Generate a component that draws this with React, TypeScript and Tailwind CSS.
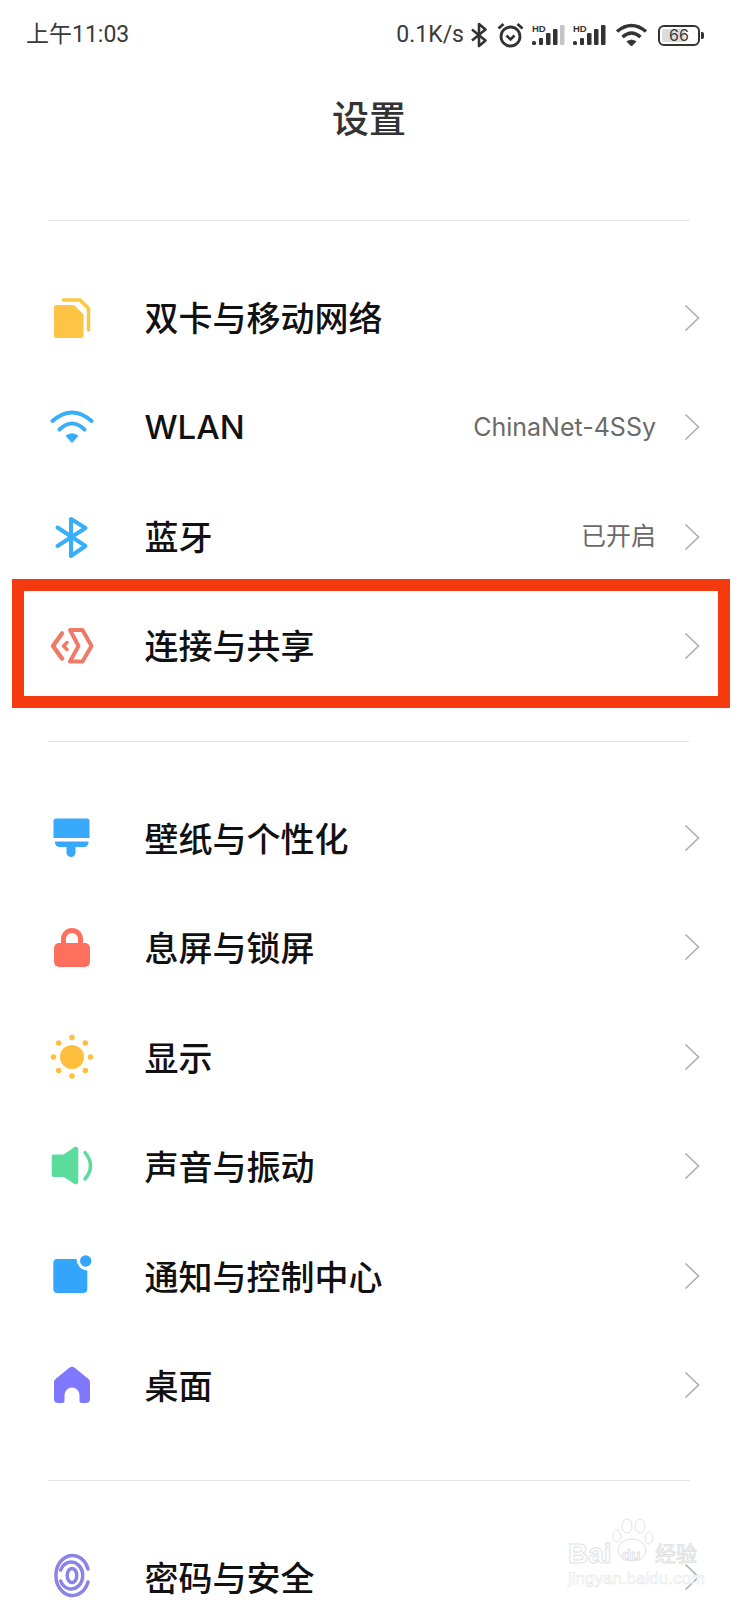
const rowFont = "font-['Inter','Noto_Sans_CJK_SC',sans-serif]";

function SimIcon() {
  return (
    <svg viewBox="0 0 48 48" className="h-12 w-12">
      <path d="M8.500 11h17.500l9.500 9.500v21a2.500 2.500 0 0 1-2.500 2.500h-24.500a2.500 2.500 0 0 1-2.500-2.500v-28a2.500 2.500 0 0 1 2.500-2.500z" fill="#ffc445" />
      <path d="M15.500 6h16.500l8.500 8.500v21.500" fill="none" stroke="#ffc445" strokeWidth="3.500" strokeLinecap="round" strokeLinejoin="round" />
    </svg>
  );
}

function WifiIcon() {
  return (
    <svg viewBox="0 0 48 48" className="h-12 w-12">
      <path d="M4.500 18Q24 1 43.500 18" fill="none" stroke="#38adf8" strokeWidth="4" strokeLinecap="round" />
      <path d="M11.500 26.500Q24 14.500 36.500 26.500" fill="none" stroke="#38adf8" strokeWidth="4" strokeLinecap="round" />
      <path d="M18 33Q24 28.500 30 33L24 39.500Z" fill="#38adf8" stroke="#38adf8" strokeWidth="1" strokeLinejoin="round" />
    </svg>
  );
}

function BluetoothIcon() {
  return (
    <svg viewBox="0 0 48 48" className="h-12 w-12">
      <path d="M9.500 14.500L37.500 33L23 43V6L37.500 15L9.500 33" fill="none" stroke="#38adf8" strokeWidth="4" strokeLinecap="round" strokeLinejoin="round" />
    </svg>
  );
}

function ShareIcon() {
  return (
    <svg viewBox="0 0 48 48" className="h-12 w-12" fill="none" stroke="#ee7b68" strokeLinecap="round" strokeLinejoin="round">
      <path d="M22 8H34.500L43.500 24L34.500 39.500H22L30.500 24Z" strokeWidth="4" />
      <path d="M14 11.500L5 24L14 36.500" strokeWidth="4.500" />
      <path d="M19 20.500L15.500 24L19 27.500" strokeWidth="3.500" />
    </svg>
  );
}

function BrushIcon() {
  return (
    <svg viewBox="0 0 48 48" className="h-12 w-12" fill="#38a8fb">
      <path d="M8 4.500h31a2.500 2.500 0 0 1 2.500 2.500V24H5.500V7a2.500 2.500 0 0 1 2.500-2.500z" />
      <path d="M7 27.500h33.500v1a4.500 4.500 0 0 1-4.500 4.500h-8.500v5.500a4.500 4.500 0 0 1-9 0V33H11.500a4.500 4.500 0 0 1-4.500-4.500z" />
    </svg>
  );
}

function LockIcon() {
  return (
    <svg viewBox="0 0 48 48" className="h-12 w-12">
      <path d="M15.500 22v-6a8.500 8.500 0 0 1 17 0v6" fill="none" stroke="#ff6f5e" strokeWidth="5" />
      <rect x="6" y="20" width="36" height="24" rx="5" fill="#ff6f5e" />
    </svg>
  );
}

function SunIcon() {
  const rays = [
    [24, 4.500], [37.300, 10], [42.500, 24], [37.300, 37.500],
    [24, 43], [10.700, 37.500], [5.500, 24], [10.700, 10],
  ];
  return (
    <svg viewBox="0 0 48 48" className="h-12 w-12" fill="#ffbe3d">
      <circle cx="24" cy="24" r="12" />
      {rays.map(([x, y]) => (
        <circle key={`${x}-${y}`} cx={x} cy={y} r="2.800" />
      ))}
    </svg>
  );
}

function SoundIcon() {
  return (
    <svg viewBox="0 0 48 48" className="h-12 w-12">
      <path d="M3.700 14.500a2 2 0 0 1 2-2h10L26.500 5a2.500 2.500 0 0 1 3.800 2v33a2.500 2.500 0 0 1-3.800 2L15.700 35h-10a2 2 0 0 1-2-2z" fill="#5cdc9c" />
      <path d="M37 10.500Q48 24 37 37" fill="none" stroke="#5cdc9c" strokeWidth="3.500" strokeLinecap="round" />
    </svg>
  );
}

function NoticeIcon() {
  return (
    <svg viewBox="0 0 48 48" className="h-12 w-12" fill="#33a6fb">
      <path d="M9 7H28.500a11.500 11.500 0 0 0 10.800 11.500V37a4 4 0 0 1-4 4H9.300a4 4 0 0 1-4-4V11a4 4 0 0 1 4-4z" />
      <circle cx="37.700" cy="9" r="5.700" />
    </svg>
  );
}

function HomeIcon() {
  return (
    <svg viewBox="0 0 48 48" className="h-12 w-12">
      <path d="M21 7a4.500 4.500 0 0 1 6 0L40.500 18a4 4 0 0 1 1.500 3V38a4 4 0 0 1-4 4H33.500a2 2 0 0 1-2-2V34a7.500 7.500 0 0 0-15 0v6a2 2 0 0 1-2 2H10a4 4 0 0 1-4-4V21a4 4 0 0 1 1.500-3z" fill="#7f78fc" />
    </svg>
  );
}

function FingerprintIcon() {
  return (
    <svg viewBox="0 0 48 48" className="h-12 w-12" fill="none" stroke="#8b84e6" strokeWidth="3.500" strokeLinecap="round">
      <path d="M40 16A16.500 20 0 1 0 40 29" />
      <path d="M12.700 17A11.500 13.500 0 1 1 12.700 28" />
      <ellipse cx="24" cy="22.500" rx="4.800" ry="7" />
    </svg>
  );
}

function Chevron() {
  return (
    <svg viewBox="0 0 16 28" className="h-7 w-4">
      <path d="M1.500 1.500L14.500 14L1.500 26.500" fill="none" stroke="#aeaeae" strokeWidth="1.600" />
    </svg>
  );
}

function StatusSignal({ lastGrey }: { lastGrey?: boolean }) {
  return (
    <svg viewBox="0 0 33 22" className="h-[22px] w-[33px]">
      <text x="0" y="8" fontSize="9.500" fontWeight="700" fill="#333" fontFamily="Liberation Sans">HD</text>
      <rect x="0" y="17" width="4" height="4" rx="1.500" fill="#333" />
      <rect x="7" y="14" width="4" height="7" rx="1" fill="#333" />
      <rect x="14" y="9" width="4.500" height="12" rx="1" fill="#333" />
      <rect x="21" y="5" width="4.500" height="16" rx="1" fill="#333" />
      <rect x="28" y="1" width="4.500" height="20" rx="1" fill={lastGrey ? "#c4c4c4" : "#333"} />
    </svg>
  );
}

function StatusBar() {
  return (
    <div className="flex h-[70px] items-center justify-between pl-[26px] pr-[34px] font-['Inter','Noto_Sans_CJK_SC',sans-serif] text-[23px] text-[#3a3a3a]">
      <span className="font-['Roboto','Noto_Sans_CJK_SC',sans-serif]">上午11:03</span>
      <div className="flex items-center">
        <span className="font-['Roboto',sans-serif]">0.1K/s</span>
        <svg viewBox="0 0 18 26" className="ml-[6px] h-[26px] w-[18px]">
          <path d="M2 7.500L15.500 18.500L9 24V2L15.500 7.500L2 18.500" fill="none" stroke="#333" strokeWidth="2.600" strokeLinejoin="round" />
        </svg>
        <svg viewBox="0 0 27 26" className="ml-[9px] h-[26px] w-[27px]" fill="none" stroke="#333">
          <circle cx="13.500" cy="14.500" r="9.500" strokeWidth="2.800" />
          <path d="M9.500 13.500L13.500 17.500L17.500 13.500" strokeWidth="2.600" />
          <path d="M1.500 6.500L6.500 2M25.500 6.500L20.500 2" strokeWidth="2.800" />
        </svg>
        <div className="ml-[8px]"><StatusSignal lastGrey /></div>
        <div className="ml-[8px]"><StatusSignal /></div>
        <svg viewBox="0 0 33 24" className="ml-[9px] h-6 w-[33px]" fill="none" stroke="#333" strokeWidth="3.400">
          <path d="M2 8.500Q16.500 -3.500 31 8.500" />
          <path d="M7.500 14Q16.500 6 25.500 14" />
          <path d="M12 18.500Q16.500 15.500 21 18.500L16.500 23Z" fill="#333" strokeWidth="1" />
        </svg>
        <div className="relative ml-[10px] flex h-[21px] w-[42px] items-center justify-center rounded-[6px] border-2 border-[#333] text-[16px] leading-none">
          <div className="absolute bottom-[2px] left-[2px] top-[2px] w-[23px] rounded-[2px] bg-[#dcdcdc]" />
          <span className="relative">66</span>
        </div>
        <div className="ml-[1px] h-[7px] w-[3px] rounded-r-[2px] bg-[#333]" />
      </div>
    </div>
  );
}

function Row({ icon, label, value, high }: { icon: React.ReactNode; label: string; value?: string; high?: boolean }) {
  return (
    <div className="flex h-[109.500px] items-center pl-12 pr-[38px]">
      {icon}
      <span className={`ml-[48.500px] flex-1 text-[#111] font-medium ${high ? "pt-[1px]" : "pt-[3px]"} ${label === "WLAN" ? "text-[33px]" : "text-[34px]"}`}>
        {label}
      </span>
      {value && <span className="mr-[28px] text-[25px] text-[#6a6a6a]">{value}</span>}
      <Chevron />
    </div>
  );
}

function Divider() {
  return <div className="mx-12 h-px bg-[#e5e5e5]" />;
}

export default function App() {
  return (
    <div className={`relative h-[1600px] w-[738px] overflow-hidden bg-white ${rowFont}`}>
      <StatusBar />
      <div className="flex h-[96px] items-center justify-center font-['Noto_Sans_CJK_SC',sans-serif] text-[37px] font-medium text-[#333]">
        设置
      </div>
      <div className="mt-[54px]"><Divider /></div>
      <div className="pb-[40px] pt-[42px]">
        <Row high icon={<SimIcon />} label="双卡与移动网络" />
        <Row high icon={<WifiIcon />} label="WLAN" value="ChinaNet-4SSy" />
        <Row high icon={<BluetoothIcon />} label="蓝牙" value="已开启" />
        <div className="relative">
          <Row high icon={<ShareIcon />} label="连接与共享" />
          <div className="absolute inset-x-3 bottom-[-7px] top-[-13px] mr-[-4px] border-[12px] border-[#f63a10]" />
        </div>
      </div>
      <Divider />
      <div className="pb-[40px] pt-[41px]">
        <Row icon={<BrushIcon />} label="壁纸与个性化" />
        <Row icon={<LockIcon />} label="息屏与锁屏" />
        <Row icon={<SunIcon />} label="显示" />
        <Row icon={<SoundIcon />} label="声音与振动" />
        <Row icon={<NoticeIcon />} label="通知与控制中心" />
        <Row icon={<HomeIcon />} label="桌面" />
      </div>
      <Divider />
      <div className="pt-[41px]">
        <Row icon={<FingerprintIcon />} label="密码与安全" />
      </div>
      {/* baidu watermark */}
      <div className="absolute left-[568px] top-[1518px] h-[72px] w-[140px] font-['Liberation_Sans',sans-serif] text-white [-webkit-text-stroke:1px_#e2e2e2]">
        <svg viewBox="0 0 46 44" className="absolute left-[41px] top-0 h-[44px] w-[46px]" fill="#fff" stroke="#e2e2e2" strokeWidth="1">
          <ellipse cx="8" cy="18" rx="4" ry="6" />
          <ellipse cx="18" cy="8" rx="5" ry="7" />
          <ellipse cx="31" cy="8" rx="5" ry="7" />
          <ellipse cx="40" cy="20" rx="4" ry="6" />
          <ellipse cx="23" cy="32" rx="14" ry="11" />
        </svg>
        <span className="absolute left-0 top-[22px] text-[28px] font-bold leading-none">Bai</span>
        <span className="absolute left-[54px] top-[29px] text-[15px] font-bold leading-none">du</span>
        <span className="absolute left-[87px] top-[24px] font-['Noto_Sans_CJK_SC',sans-serif] text-[21px] leading-none">经验</span>
        <span className="absolute left-0 top-[52px] text-[17px] leading-none [-webkit-text-stroke:0.5px_#e4e4e4]">jingyan.baidu.com</span>
      </div>
    </div>
  );
}
